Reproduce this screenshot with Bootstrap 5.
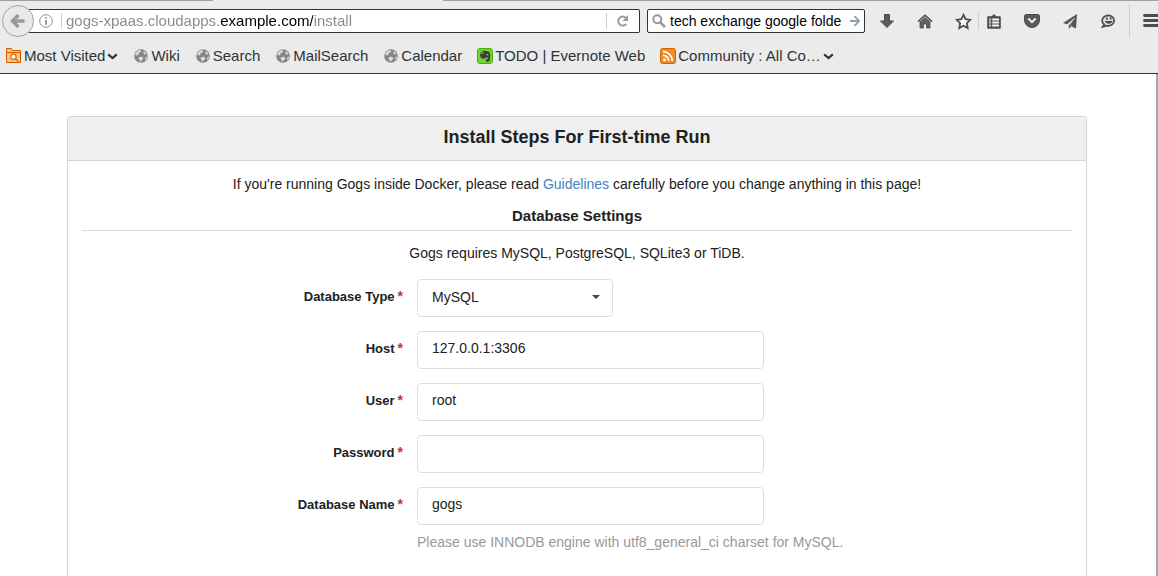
<!DOCTYPE html>
<html lang="en">
<head>
<meta charset="utf-8">
<meta name="viewport" content="width=device-width, initial-scale=1">
<title>Install - Gogs</title>
<link href="https://cdn.jsdelivr.net/npm/bootstrap@5.3.0/dist/css/bootstrap.min.css" rel="stylesheet">
<style>
  body { font: 14px/20px "Liberation Sans", Arial, sans-serif; color: #212121; background: #fff; }
  button { border: 0; padding: 0; background: none; color: #4c4c4c; }
  svg { display: block; flex: none; }

  /* browser chrome */
  .chrome { background: #ebebeb; border-bottom: 1px solid #2e3436; font-size: 15px; color: #2e3436; }
  .tab-edge { height: 2px; }
  .tab-edge span { background: #a09f9f; height: 1px; }
  .tab-edge .tab-left { width: 213px; }
  .tab-edge .tab-open { width: 230px; background: #ebebeb; }
  .toolbar { height: 38px; padding-left: 2px; }
  .back { width: 32px; height: 32px; border: 1px solid #a3a3a3; border-radius: 50%; background: #e9e9e9; z-index: 1; place-items: center; }
  .field { height: 24px; background: #fff; border: 1px solid #2e3436; border-radius: 2px; }
  .field input { border: 0; outline: 0; padding: 0; background: transparent; min-width: 0; height: 20px; }
  .address { margin-left: -6px; padding-left: 11px; border-left: 0; }
  .address .url { color: #000; -webkit-text-fill-color: transparent; -webkit-background-clip: text; background-clip: text;
    background-image: linear-gradient(90deg, #888 0 154px, #000 154px 247px, #888 247px); }
  .rule { width: 1px; height: 18px; background: #cfcfcf; flex: none; }
  .address .rule { height: 16px; }
  .tools-rule { margin: 0 5px; }
  .menu-rule { height: 34px; margin: 0 13px 0 11px; }
  .search { width: 218px; margin-left: 7px; padding-left: 4px; }
  .search input { color: #000; font-size: 14px; }
  .tools { gap: 18px; }
  .tools button { width: 20px; height: 20px; display: grid; place-items: center; }
  .menu-btn { width: 15px; overflow: hidden; }
  .bookmarks { height: 33px; padding: 0 0 2px 6px; gap: 15px; }
  .bookmarks a { color: #2e3436; text-decoration: none; gap: 2px; white-space: nowrap; }
  .bookmarks .feed svg:last-child { margin-top: 2px; }

  /* page */
  .viewport { border-right: 2px solid #a8a8a8; padding: 42px 2px 0 0; min-height: calc(100vh - 74px); }
  .install { max-width: 1020px; border-color: #d4d4d5; border-radius: 4px 4px 0 0; border-bottom: 0; color: #212121; min-height: calc(100vh - 116px); }
  .install .card-header { background: #efefef; border-color: #d4d4d5; padding: 9px 14px 12px; }
  .install h1 { font-size: 18px; line-height: 22px; font-weight: bold; margin: 0; }
  .install .card-body { padding: 13px 14px; }
  .install h2 { font-size: 15px; line-height: 18px; font-weight: bold; margin: 13px 0 12px; padding-bottom: 5px; border-bottom: 1px solid #dededf; }
  .install a { color: #4183c4; text-decoration: none; }
  .field-row { display: flex; gap: 14px; margin-bottom: 14px; }
  .field-row label { width: 321px; text-align: right; font-size: 13px; font-weight: bold; line-height: 34px; flex: none; }
  .field-row label::after { content: "*"; color: #db2828; font-size: 14px; margin-left: 3px; }
  .field-row .form-control, .field-row .form-select { height: 38px; font-size: 14px; line-height: 20px; color: #212121; border-color: #dededf; border-radius: 4px; padding: 5px 14px 9px; box-shadow: none; }
  .field-row .form-control { width: 35%; }
  .field-row .form-select { width: 196px; padding: 7px 14px 9px;
    background-image: url("data:image/svg+xml,%3Csvg xmlns='http://www.w3.org/2000/svg' viewBox='0 0 8 4'%3E%3Cpath d='M0 0h8L4 4z' fill='%23444'/%3E%3C/svg%3E");
    background-size: 8px 4px; background-position: right 12px top 15px; }
  .hint { margin: -7px 0 0 335px; color: #999; }
</style>
</head>
<body>
<svg width="0" height="0" class="position-absolute" aria-hidden="true">
  <symbol id="globe" viewBox="0 0 14 14">
    <circle cx="7" cy="7" r="6.8" fill="#858585"/>
    <path d="M1 5.500 2.800 2.400l3-1.400L7.500 2 6 3.600 4.600 4 4.400 5.800 3 6.500zM9.500 2l1.800 1.100 1 1.900-1.400.6-1.200-.6zM5.600 8l2.400-.2 1.300 1.300-.8 1.600-1.500 1-.8 1.200L5.300 10.600 4.300 9.200zM11.400 8l1.600-.6-.6 2.600-1.400 1z" fill="#dedede"/>
  </symbol>
  <symbol id="chev" viewBox="0 0 11 7"><path d="M1.200 1.300 5.500 5l4.300-3.700" fill="none" stroke="#2e3436" stroke-width="2.200"/></symbol>
</svg>

<header class="chrome">
  <div class="tab-edge d-flex"><span class="tab-left"></span><span class="tab-open"></span><span class="flex-grow-1"></span></div>
  <nav class="toolbar d-flex align-items-center overflow-hidden" aria-label="Navigation">
    <button class="back d-grid flex-shrink-0 position-relative" aria-label="Back">
      <svg width="16" height="16" viewBox="0 0 16 16"><path d="M8.500 2 2.500 8l6 6M3 8h11.500" fill="none" stroke="#999" stroke-width="3.400"/></svg>
    </button>
    <div class="field address d-flex align-items-center flex-grow-1">
      <svg width="14" height="14" viewBox="0 0 14 14"><circle cx="7" cy="7" r="6.300" fill="none" stroke="#909090"/><path d="M6.200 3.200h1.700v1.500H6.200zM6.200 5.900h1.700v4.800H6.200z" fill="#888"/></svg>
      <span class="rule ms-2 me-1"></span>
      <input class="url flex-grow-1" type="text" aria-label="Address" value="gogs-xpaas.cloudapps.example.com/install">
      <span class="rule"></span>
      <button class="px-2" aria-label="Reload"><svg width="16" height="14" viewBox="0 0 16 14"><path d="M11.300 9.800A4.500 4.500 0 1 1 11 4" fill="none" stroke="#8d9fad" stroke-width="2"/><path d="M13 1v6H7.500z" fill="#8d9fad"/></svg></button>
    </div>
    <div class="field search d-flex align-items-center flex-shrink-0">
      <svg width="14" height="14" viewBox="0 0 14 14"><circle cx="5.300" cy="5.300" r="4" fill="none" stroke="#999" stroke-width="2"/><path d="m8.300 8.300 4.700 4.700" stroke="#999" stroke-width="2.600"/></svg>
      <input class="flex-grow-1 mx-1" type="text" aria-label="Search" value="tech exchange google folde">
      <button class="me-1" aria-label="Go"><svg width="10" height="12" viewBox="0 0 10 12"><path d="M0 6h9M4.500 1.200 9 6l-4.500 4.800" fill="none" stroke="#8d9fad" stroke-width="1.800"/></svg></button>
    </div>
    <div class="tools d-flex align-items-center flex-shrink-0 ms-2 ps-1">
      <button aria-label="Downloads"><svg width="14" height="14" viewBox="0 0 14 14"><path d="M4.500.5h5V7h4L7 13.500.5 7h4z" fill="#5a5a5a" stroke="#4c4c4c"/></svg></button>
      <button aria-label="Home"><svg width="16" height="15" viewBox="0 0 16 15"><path d="M1 7.600 8 1.200l7 6.400" fill="none" stroke="#4c4c4c" stroke-width="1.500"/><path d="M3 8 8 3.500 13 8v6H9.500v-4h-3v4H3z" fill="#606060" stroke="#4c4c4c" stroke-width=".8"/></svg></button>
      <button aria-label="Bookmark this page"><svg width="17" height="17" viewBox="0 0 17 17"><path d="m8.500 1.800 2.100 4.300 4.700.7-3.400 3.400.8 4.800-4.200-2.300L4.300 15l.8-4.800L1.700 6.800l4.700-.7z" fill="#f5f5f5" stroke="#4c4c4c" stroke-width="1.800"/></svg></button>
    </div>
    <span class="rule tools-rule"></span>
    <div class="tools d-flex align-items-center flex-shrink-0">
      <button aria-label="Show bookmarks"><svg width="14" height="15" viewBox="0 0 14 15"><path d="M1 3h4l2-2 2 2h4v11H1z" fill="#555" stroke="#4c4c4c" stroke-width="1.600" stroke-linejoin="round"/><path d="M2.300 5.500h1.500M2.300 8.500h1.500M2.300 11.500h1.500M5.200 5.500h6.800M5.200 8.500h6.800M5.200 11.500h6.800" stroke="#f2f2f2" stroke-width="1.800"/></svg></button>
      <button aria-label="Save to Pocket"><svg width="16" height="14" viewBox="0 0 16 14"><path d="M1.500.5h13l1 1V6a7.500 7.500 0 0 1-15 0V1.500z" fill="#5a5a5a" stroke="#4c4c4c"/><path d="m4.300 4.500 3.700 3.600 3.700-3.600" fill="none" stroke="#f2f2f2" stroke-width="2"/></svg></button>
      <button aria-label="Share this page"><svg width="14" height="15" viewBox="0 0 14 15"><path d="M14 0 0 9l4 1.300L12 3.500 5.800 11v4l2.400-2.700 4.800 2.200z" fill="#555"/><path d="M11.500 4 7 10.500l1 1" fill="none" stroke="#eee" stroke-width=".7"/></svg></button>
      <button aria-label="Start a conversation"><svg width="15" height="14" viewBox="0 0 15 14"><path d="M3.200 10.500 1.500 13l4-1.400a6 5.200 0 1 0-2.300-1.100z" fill="#ddd" stroke="#4c4c4c" stroke-width="1.700"/><path d="M5.800 3.500v2M9.700 3.500v2" stroke="#444" stroke-width="1.700"/><path d="M4 7h7.500c-.8 3.600-6.700 3.600-7.500 0z" fill="#4c4c4c"/></svg></button>
    </div>
    <span class="rule menu-rule"></span>
    <button class="menu-btn flex-shrink-0" aria-label="Open menu"><svg width="20" height="14" viewBox="0 0 20 14"><path d="M1.500 1.500h17M1.500 6.500h17M1.500 11.500h17" stroke="#4c4c4c" stroke-width="2.800" stroke-linecap="round"/></svg></button>
  </nav>
  <nav class="bookmarks d-flex align-items-center" aria-label="Bookmarks">
    <a href="#" class="feed d-flex align-items-center">
      <svg width="16" height="15" viewBox="0 0 16 15"><path d="M.5 14.500V.5h5l1 2h8v12z" fill="#f5c488" stroke="#ce5c00"/><path d="M1 4.500h13" stroke="#ce5c00"/><circle cx="7.500" cy="8.800" r="2.600" fill="#fff" stroke="#d8700f" stroke-width="1.200"/><path d="m9.500 10.800 3 3" stroke="#d8700f" stroke-width="1.600"/></svg>
      <span>Most Visited</span><svg width="11" height="7"><use href="#chev"/></svg></a>
    <a href="#" class="d-flex align-items-center"><svg width="16" height="14"><use href="#globe"/></svg>Wiki</a>
    <a href="#" class="d-flex align-items-center"><svg width="16" height="14"><use href="#globe"/></svg>Search</a>
    <a href="#" class="d-flex align-items-center"><svg width="16" height="14"><use href="#globe"/></svg>MailSearch</a>
    <a href="#" class="d-flex align-items-center"><svg width="16" height="14"><use href="#globe"/></svg>Calendar</a>
    <a href="#" class="d-flex align-items-center"><svg width="16" height="16" viewBox="0 0 16 16"><rect x=".5" y=".5" width="15" height="15" rx="2.500" fill="#72d62c" stroke="#4faa18"/><path d="M3 5.500 6 2.500l4 .5 2.500 1 .8 4-.5 5-2.800 1-1.300-1.200.3-1.600 2-.2-.2-1.200L8.500 9.500l-.8 1.300-3-.3L3 8z" fill="#3b4038"/><path d="M3.200 5.400h2.700V2.800" fill="none" stroke="#72d62c" stroke-width=".8"/><path d="M9.800 6h1.400v1.300H9.800z" fill="#a2dd78"/></svg>TODO | Evernote Web</a>
    <a href="#" class="feed d-flex align-items-center">
      <svg width="16" height="16" viewBox="0 0 16 16"><rect x=".5" y=".5" width="15" height="15" rx="2" fill="#f58a1f" stroke="#cf6307"/><circle cx="4.500" cy="11.700" r="1.500" fill="#fff"/><path d="M3 7.300a5.700 5.700 0 0 1 5.700 5.700M3 3.700A9.300 9.300 0 0 1 12.300 13" fill="none" stroke="#fff" stroke-width="1.800"/></svg>
      <span>Community : All Co…</span><svg width="11" height="7"><use href="#chev"/></svg></a>
  </nav>
</header>

<main class="viewport">
  <form class="card install mx-auto">
    <div class="card-header text-center"><h1>Install Steps For First-time Run</h1></div>
    <div class="card-body">
      <p class="text-center m-0">If you're running Gogs inside Docker, please read <a href="#">Guidelines</a> carefully before you change anything in this page!</p>
      <h2 class="text-center">Database Settings</h2>
      <p class="text-center mb-3">Gogs requires MySQL, PostgreSQL, SQLite3 or TiDB.</p>
      <div class="field-row"><label for="dbtype">Database Type</label><select id="dbtype" class="form-select"><option>MySQL</option><option>PostgreSQL</option><option>SQLite3</option><option>TiDB</option></select></div>
      <div class="field-row"><label for="host">Host</label><input id="host" class="form-control" type="text" value="127.0.0.1:3306"></div>
      <div class="field-row"><label for="user">User</label><input id="user" class="form-control" type="text" value="root"></div>
      <div class="field-row"><label for="pass">Password</label><input id="pass" class="form-control" type="password"></div>
      <div class="field-row"><label for="dbname">Database Name</label><input id="dbname" class="form-control" type="text" value="gogs"></div>
      <p class="hint">Please use INNODB engine with utf8_general_ci charset for MySQL.</p>
    </div>
  </form>
</main>
<script src="https://cdn.jsdelivr.net/npm/bootstrap@5.3.0/dist/js/bootstrap.bundle.min.js"></script>
</body>
</html>
